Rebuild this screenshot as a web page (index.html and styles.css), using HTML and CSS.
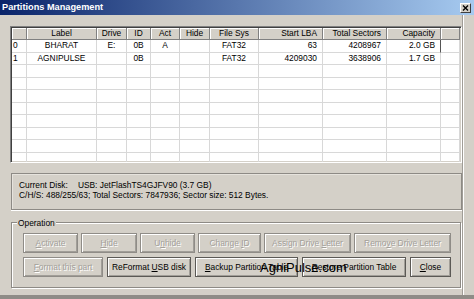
FILE: index.html
```html
<!DOCTYPE html>
<html>
<head>
<meta charset="utf-8">
<link rel="stylesheet" href="styles.css">
</head>
<body>
<div class="window">
  <div class="titlebar">
    <span class="title">Partitions Management</span>
    <span class="tclose"><svg width="7" height="6" viewBox="0 0 7 6"><path d="M1 0.5 L6 5.5 M6 0.5 L1 5.5" stroke="#000" stroke-width="1.4" fill="none"/></svg></span>
  </div>
  <div class="main">
    <div class="client">
      <div class="table">
        <div class="row head">
          <span></span><span>Label</span><span>Drive</span><span>ID</span><span>Act</span><span>Hide</span><span>File Sys</span><span class="r">Start LBA</span><span class="r">Total Sectors</span><span class="r">Capacity</span><span></span>
        </div>
        <div class="row">
          <span class="l">0</span><span>BHARAT</span><span>E:</span><span>0B</span><span>A</span><span></span><span>FAT32</span><span class="r">63</span><span class="r">4208967</span><span class="r focus">2.0 GB</span><span></span>
        </div>
        <div class="row">
          <span class="l">1</span><span>AGNIPULSE</span><span></span><span>0B</span><span></span><span></span><span>FAT32</span><span class="r">4209030</span><span class="r">3638906</span><span class="r">1.7 GB</span><span></span>
        </div>
        <div class="row"><span></span><span></span><span></span><span></span><span></span><span></span><span></span><span></span><span></span><span></span><span></span></div>
        <div class="row"><span></span><span></span><span></span><span></span><span></span><span></span><span></span><span></span><span></span><span></span><span></span></div>
        <div class="row"><span></span><span></span><span></span><span></span><span></span><span></span><span></span><span></span><span></span><span></span><span></span></div>
        <div class="row"><span></span><span></span><span></span><span></span><span></span><span></span><span></span><span></span><span></span><span></span><span></span></div>
        <div class="row"><span></span><span></span><span></span><span></span><span></span><span></span><span></span><span></span><span></span><span></span><span></span></div>
        <div class="row"><span></span><span></span><span></span><span></span><span></span><span></span><span></span><span></span><span></span><span></span><span></span></div>
        <div class="row"><span></span><span></span><span></span><span></span><span></span><span></span><span></span><span></span><span></span><span></span><span></span></div>
        <div class="row"><span></span><span></span><span></span><span></span><span></span><span></span><span></span><span></span><span></span><span></span><span></span></div>
      </div>
      <div class="info">
        <div><span class="lbl">Current Disk:</span>USB: JetFlashTS4GJFV90 (3.7 GB)</div>
        <div>C/H/S: 488/255/63; Total Sectors: 7847936; Sector size: 512 Bytes.</div>
      </div>
      <div class="group">
        <span class="legend">Operation</span>
        <div class="btnrow r1">
          <div class="btn dis w55"><span><u>A</u>ctivate</span></div>
          <div class="btn dis w56"><span><u>H</u>ide</span></div>
          <div class="btn dis w55"><span>U<u>n</u>hide</span></div>
          <div class="btn dis w63"><span>Change <u>I</u>D</span></div>
          <div class="btn dis w87"><span>Assign Drive <u>L</u>etter</span></div>
          <div class="btn dis w97"><span>Remo<u>v</u>e Drive Letter</span></div>
        </div>
        <div class="btnrow r2">
          <div class="btn dis w80"><span><u>F</u>ormat this part</span></div>
          <div class="btn w84"><span>ReFormat <u>U</u>SB disk</span></div>
          <div class="btn w103"><span><u>B</u>ackup Partition Table</span></div>
          <div class="btn w104"><span><u>R</u>estore Partition Table</span></div>
          <div class="btn w41"><span><u>C</u>lose</span></div>
        </div>
        <span class="wm">AgniPulse.com</span>
      </div>
    </div>
    <div class="rframe"></div>
  </div>
  <div class="bframe"></div>
</div>
</body>
</html>
```
FILE: styles.css
```css
html, body {
  margin: 0;
  padding: 0;
}
body {
  width: 474px;
  height: 299px;
  overflow: hidden;
  background: #d4d0c8;
  font-family: "Liberation Sans", Arial, sans-serif;
  font-size: 8.4px;
  color: #000;
}
.window {
  display: flex;
  flex-direction: column;
  height: 299px;
}
.titlebar {
  height: 15px;
  flex: none;
  background: linear-gradient(to right, #0a246a, #a6caf0);
  display: flex;
  align-items: center;
  justify-content: space-between;
}
.title {
  color: #fff;
  font-weight: bold;
  font-size: 9.2px;
  line-height: 15px;
  padding-left: 2px;
}
.tclose {
  width: 11px;
  height: 10px;
  box-sizing: border-box;
  background: #d4d0c8;
  border: 1px solid;
  border-color: #fff #404040 #404040 #fff;
  margin-right: 3px;
  display: flex;
  align-items: center;
  justify-content: center;
}
.tclose svg { display: block; }
.main {
  flex: 1;
  display: flex;
}
.client {
  width: 462px;
  flex: none;
}
.rframe {
  flex: 1;
  border-left: 1px solid #a09d97;
  box-shadow: inset 1px 0 #fff;
}
.bframe {
  height: 4px;
  flex: none;
  background: #8f8c87;
}
.table {
  margin: 11px 0 0 10px;
  width: 452px;
  height: 137px;
  box-sizing: border-box;
  border: 1px solid;
  border-color: #808080 #fff #fff #808080;
  box-shadow: inset 1px 1px #404040, inset -1px -1px #d4d0c8;
  background: #fff;
  padding: 1px;
  overflow: hidden;
}
.row {
  display: grid;
  grid-template-columns: 15px 70px 30px 24px 29px 30px 49px 64px 64px 54px 1fr;
  height: 12.5px;
}
.row > span {
  box-sizing: border-box;
  border-right: 1px solid #d8d8d8;
  border-bottom: 1px solid #d8d8d8;
  line-height: 11.5px;
  padding: 0 2px;
  white-space: nowrap;
  overflow: hidden;
  text-align: center;
}
.row.head {
  height: 12px;
}
.row.head > span {
  background: #d4d0c8;
  border-color: #808080;
  box-shadow: inset 1px 1px #fff;
  line-height: 11px;
}
.row > span.l { text-align: left; padding-left: 1px; }
.row > span.r { text-align: right; padding-right: 5px; }
.row > span.focus { border-right-color: #555; }
.info {
  margin: 10px 0 0 11px;
  width: 451px;
  height: 37px;
  box-sizing: border-box;
  border: 1px solid #8d8a85;
  box-shadow: 0 1px 0 #fff, inset 1px 1px 0 #e6e3dd;
  padding: 6px 0 0 7px;
  line-height: 10px;
}
.lbl { margin-right: 10px; }
.group {
  position: relative;
  margin: 12px 0 0 11px;
  width: 450px;
  height: 66px;
  box-sizing: border-box;
  border: 1px solid #8d8a85;
  box-shadow: inset 1px 1px #fff, 1px 1px #fff;
  padding: 10px 0 0 11px;
  display: flex;
  flex-direction: column;
  gap: 4px;
}
.legend {
  position: absolute;
  left: 5px;
  top: -5px;
  background: #d4d0c8;
  padding: 0 1px;
  line-height: 10px;
}
.btnrow { display: flex; }
.btnrow.r1 { gap: 3px; }
.btnrow.r2 { gap: 4px; }
.btn {
  height: 20px;
  flex: none;
  box-sizing: border-box;
  border: 1px solid #5b5955;
  box-shadow: inset 1px 1px #fff, inset -1px -1px #a19e98;
  background: #d4d0c8;
  display: flex;
  align-items: center;
  justify-content: center;
  white-space: nowrap;
  overflow: hidden;
}
.btn.dis {
  color: #a3a09a;
  text-shadow: 1px 1px #fff;
  border-color: #8f8c87;
}
.w41 { width: 41px; }
.w55 { width: 55px; }
.w56 { width: 56px; }
.w63 { width: 63px; }
.w80 { width: 80px; }
.w84 { width: 84px; }
.w87 { width: 87px; }
.w97 { width: 97px; }
.w103 { width: 103px; }
.w104 { width: 104px; }
.wm {
  position: absolute;
  left: 248px;
  top: 38px;
  font-size: 13px;
  line-height: 13px;
  color: #000;
}
```
